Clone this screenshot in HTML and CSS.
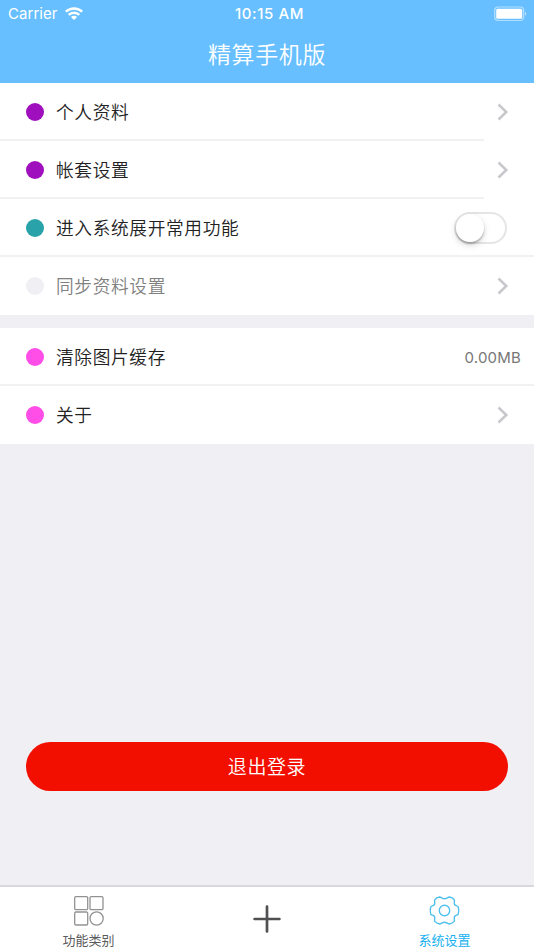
FILE: index.html
```html
<!DOCTYPE html>
<html lang="zh-CN">
<head>
<meta charset="utf-8">
<title>精算手机版</title>
<link rel="stylesheet" href="styles.css">
</head>
<body>
<header class="header">
  <div class="status">
    <div class="carrier"><span>Carrier</span>
      <svg width="18" height="13" viewBox="0 0 18 13" fill="none" stroke="#fff" stroke-width="2.5"><path d="M.8 4.700C5.500.4 12.500.4 17.200 4.700M3.700 7.900c3-2.900 7.600-2.900 10.600 0"/><path d="M9 12.900L5.900 10c1.700-1.700 4.500-1.700 6.200 0z" fill="#fff" stroke="none"/></svg>
    </div>
    <div class="time">10:15 AM</div>
    <div class="power">
      <svg width="34" height="16" viewBox="0 0 34 16"><rect x=".7" y="1" width="29" height="13.500" rx="3.500" fill="none" stroke="#fff" stroke-opacity=".5" stroke-width="1.200"/><rect x="2.200" y="2.700" width="26" height="10" rx="1.500" fill="#fff"/><path d="M31.200 5.500q2.200 2.200 0 4.500z" fill="#fff" fill-opacity=".6"/></svg>
    </div>
  </div>
  <h1 class="title">精算手机版</h1>
</header>
<main class="content">
  <section class="group">
    <div class="row short"><i class="dot purple"></i><span class="label">个人资料</span><svg class="chevron" viewBox="0 0 12 18"><path d="M1.500 1.500L9.300 9l-7.800 7.500"/></svg></div>
    <div class="row short"><i class="dot purple"></i><span class="label">帐套设置</span><svg class="chevron" viewBox="0 0 12 18"><path d="M1.500 1.500L9.300 9l-7.800 7.500"/></svg></div>
    <div class="row"><i class="dot teal"></i><span class="label">进入系统展开常用功能</span><span class="switch"><span class="knob"></span></span></div>
    <div class="row"><i class="dot gray"></i><span class="label muted">同步资料设置</span><svg class="chevron" viewBox="0 0 12 18"><path d="M1.500 1.500L9.300 9l-7.800 7.500"/></svg></div>
  </section>
  <section class="group">
    <div class="row"><i class="dot pink"></i><span class="label">清除图片缓存</span><span class="size">0.00MB</span></div>
    <div class="row"><i class="dot pink"></i><span class="label">关于</span><svg class="chevron" viewBox="0 0 12 18"><path d="M1.500 1.500L9.300 9l-7.800 7.500"/></svg></div>
  </section>
  <button class="logout">退出登录</button>
</main>
<nav class="tabs">
  <div class="tab">
    <svg width="32" height="32" viewBox="-16 -16 32 32" fill="none" stroke="#929292" stroke-width="1.300"><rect x="-14.300" y="-14.300" width="13" height="13" rx="1.200"/><rect x="1" y="-14.300" width="13" height="13" rx="1.200"/><rect x="-14.300" y="1" width="13" height="13" rx="1.200"/><circle cx="7.600" cy="7.500" r="6.600"/></svg>
    <span>功能类别</span>
  </div>
  <div class="tab add">
    <svg width="30" height="30" viewBox="-15 -15 30 30" stroke="#505052" stroke-width="2.700" stroke-linecap="round"><path d="M-12.400 0H12.400M0-12.400V12.400"/></svg>
  </div>
  <div class="tab active">
    <svg width="32" height="32" viewBox="-15.500 -15.500 32 32" fill="none" stroke="#4fc0ed" stroke-width="1.400" stroke-linejoin="round"><path d="M0-11.700C2.200-11.700 3.200-13.500 5-13.500C6.800-13.200 8.700-12.100 9.700-10.900C10.500-9.200 9-7.300 10.200-5.800C11.400-4.300 13.300-4.900 13.800-3.500C14.300-1.500 14.300 1.500 13.800 3.500C13.300 4.900 11.400 4.300 10.200 5.800C9 7.300 10.500 9.200 9.700 10.900C8.700 12.100 6.800 13.200 5 13.500C3.200 13.500 2.200 11.700 0 11.700C-2.200 11.700-3.200 13.500-5 13.500C-6.800 13.200-8.700 12.100-9.700 10.900C-10.500 9.200-9 7.300-10.200 5.800C-11.400 4.300-13.300 4.900-13.800 3.500C-14.300 1.500-14.300-1.500-13.800-3.500C-13.300-4.900-11.400-4.300-10.200-5.800C-9-7.300-10.500-9.200-9.700-10.900C-8.700-12.100-6.800-13.200-5-13.500C-3.200-13.500-2.200-11.700 0-11.700Z"/><circle r="5.200"/></svg>
    <span>系统设置</span>
  </div>
</nav>
</body>
</html>
```
FILE: styles.css
```css
* { box-sizing: border-box; }
body {
  margin: 0;
  height: 950px;
  display: flex;
  flex-direction: column;
  overflow: hidden;
  background: #efeff4;
  color: #333;
  font-family: Inter, "Noto Sans CJK SC", sans-serif;
}
svg { display: block; flex: none; }
.header { height: 83px; flex: none; background: #67bfff; color: #fff; }
.status {
  display: grid;
  grid-template-columns: 1fr auto 1fr;
  align-items: center;
  height: 27px;
  padding: 0 6px 0 8px;
  font-size: 15px;
  line-height: 27px;
}
.carrier { display: flex; align-items: center; gap: 7px; letter-spacing: .05px; }
.time { font-weight: 500; letter-spacing: .6px; padding-left: 3px; }
.power { display: flex; justify-content: flex-end; }
.title {
  margin: 0;
  height: 52px;
  line-height: 52px;
  text-align: center;
  font-family: "Noto Sans CJK SC", sans-serif;
  font-size: 23px;
  font-weight: 350;
  letter-spacing: .6px;
}
.content { flex: 1; }
.group { background: #fff; margin-bottom: 13px; height: 232px; }
.group + .group { height: 116px; margin-bottom: 298px; }
.row {
  height: 58px;
  display: flex;
  align-items: center;
  padding: 0 26px;
  background: linear-gradient(#f1f1f3, #f1f1f3) 0 100% / 100% 2px no-repeat;
}
.row.short { background-size: 484px 2px; }
.row:last-child { background: none; }
.dot { width: 18px; height: 18px; border-radius: 50%; margin-right: 12px; }
.purple { background: #9f0fbd; }
.teal { background: #29a2aa; }
.gray { background: #efeff4; }
.pink { background: #ff4de8; }
.label { flex: 1; padding-bottom: 2px; font-family: "Noto Sans CJK SC", sans-serif; font-size: 17.700px; font-weight: 350; letter-spacing: .65px; color: #222; }
.label.muted { color: #808080; }
.chevron { width: 12px; height: 18px; margin-right: -1px; fill: none; stroke: #c7c7cc; stroke-width: 2.500px; }
.switch { width: 53px; height: 32px; border: 2px solid #e5e5e5; border-radius: 16px; margin-right: 1px; }
.knob { display: block; width: 28px; height: 28px; border-radius: 50%; background: #fff; box-shadow: 0 3px 7px rgba(0,0,0,.16), 0 2px 2px rgba(0,0,0,.22); }
.size { margin-right: -13px; color: #777; font-size: 15px; letter-spacing: .2px; }
.logout {
  display: block;
  width: 482px;
  height: 49px;
  margin: 0 26px;
  padding: 0 0 2px;
  border: 0;
  border-radius: 24.500px;
  background: #f20f00;
  color: #fff;
  font-family: "Noto Sans CJK SC", sans-serif;
  font-size: 19px;
  font-weight: 350;
  letter-spacing: .6px;
}
.tabs { height: 65px; flex: none; display: grid; grid-template-columns: repeat(3, 1fr); background: #fff; border-top: 2px solid #d9d9dd; }
.tab { display: flex; flex-direction: column; align-items: center; padding-top: 8px; font-family: "Noto Sans CJK SC", sans-serif; font-size: 13px; line-height: 18px; color: #5b5b5b; }
.tab span { margin-top: 4px; padding-right: 1px; font-weight: 400; }
.add { padding-top: 17px; }
.tab.active { color: #16b0f0; }
```
